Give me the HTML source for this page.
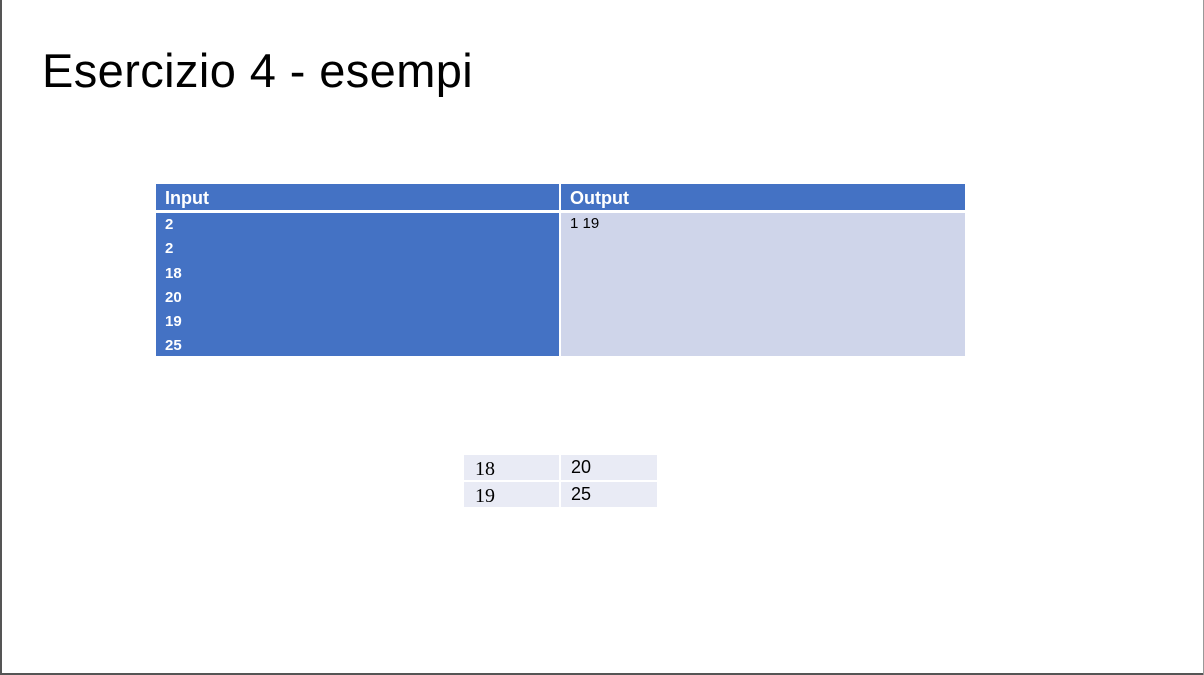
<!DOCTYPE html>
<html><head><style>
body{margin:0;width:1204px;height:675px;background:#fff;position:relative;overflow:hidden;font-family:"Liberation Sans",sans-serif}
.a{position:absolute}
.t{color:#fff;font-weight:bold;font-size:16px}
</style></head><body>
<div class="a" style="left:0;top:0;width:2px;height:675px;background:#555"></div>
<div class="a" style="left:0;top:673px;width:1204px;height:2px;background:#555"></div>
<div class="a" style="left:1203px;top:0;width:1px;height:675px;background:#999"></div>
<div class="a" style="left:42px;top:43px;font-size:47px;color:#000;letter-spacing:0.4px">Esercizio 4 - esempi</div>

<div class="a" style="left:156px;top:184px;width:403px;height:26px;background:#4472c4"></div>
<div class="a" style="left:561px;top:184px;width:404px;height:26px;background:#4472c4"></div>
<div class="a" style="left:156px;top:213px;width:403px;height:143px;background:#4472c4"></div>
<div class="a" style="left:561px;top:213px;width:404px;height:143px;background:#cfd5ea"></div>
<div class="a t" style="left:165px;top:188px;font-size:18px">Input</div>
<div class="a t" style="left:570px;top:188px;font-size:18px">Output</div>
<div class="a t" style="left:165px;top:213px;line-height:24.3px;font-size:15px">2<br>2<br>18<br>20<br>19<br>25</div>
<div class="a" style="left:570px;top:215px;font-size:15px;color:#000">1 19</div>

<div class="a" style="left:464px;top:455px;width:95px;height:25px;background:#e9ebf5"></div>
<div class="a" style="left:561px;top:455px;width:96px;height:25px;background:#e9ebf5"></div>
<div class="a" style="left:464px;top:482px;width:95px;height:25px;background:#e9ebf5"></div>
<div class="a" style="left:561px;top:482px;width:96px;height:25px;background:#e9ebf5"></div>
<div class="a" style="left:475px;top:458px;font-size:20px;font-family:'Liberation Serif',serif">18</div>
<div class="a" style="left:475px;top:485px;font-size:20px;font-family:'Liberation Serif',serif">19</div>
<div class="a" style="left:571px;top:457px;font-size:18px">20</div>
<div class="a" style="left:571px;top:484px;font-size:18px">25</div>
</body></html>
